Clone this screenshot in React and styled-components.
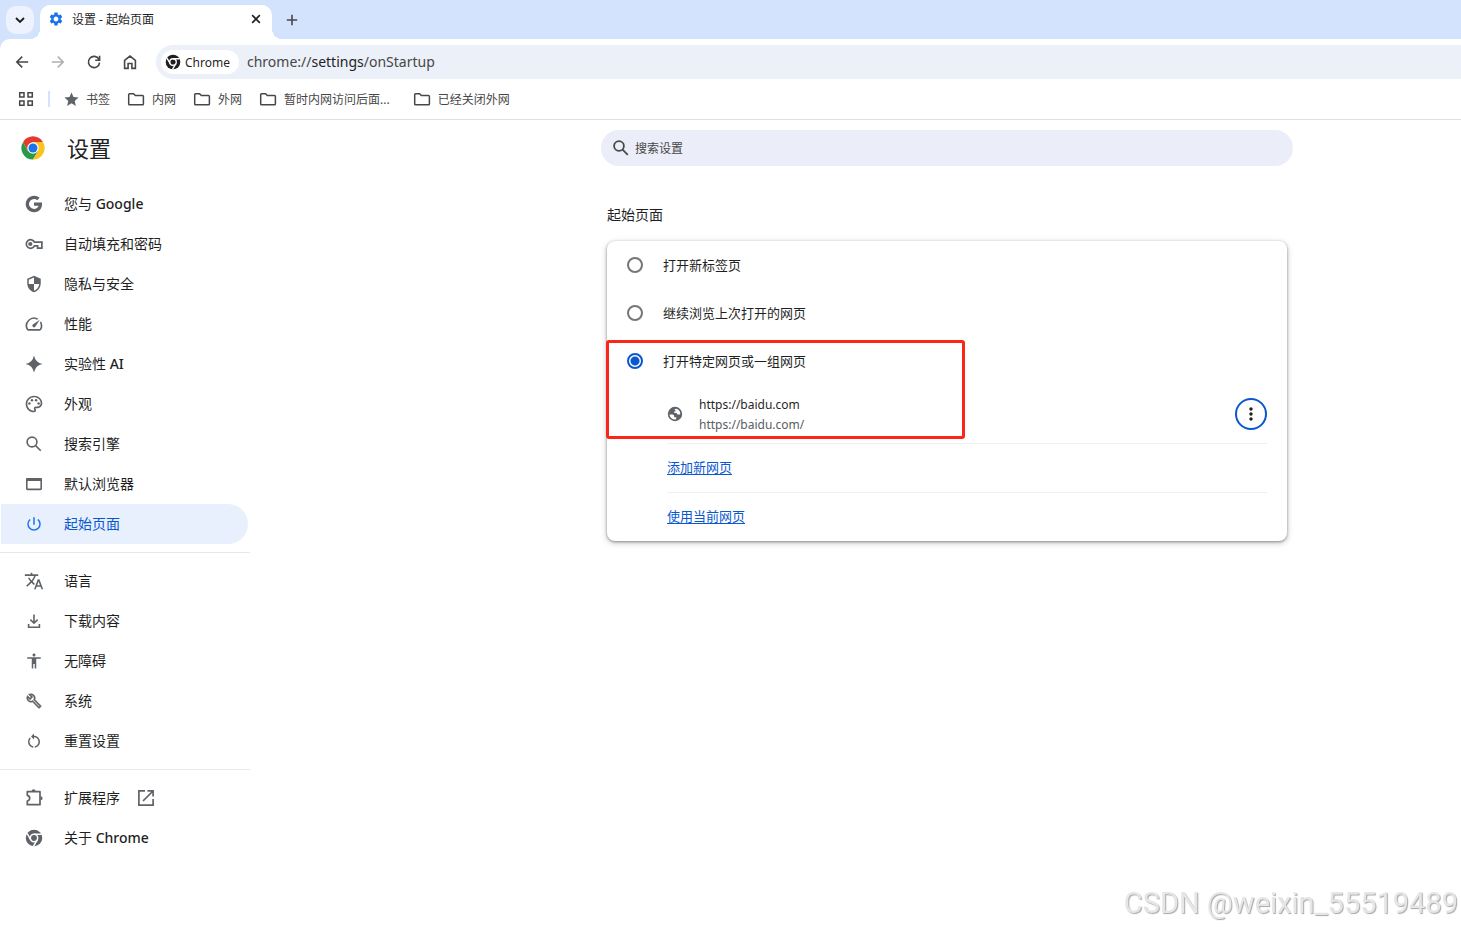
import React, { useState } from "react";
import styled, { createGlobalStyle } from "styled-components";
import {
  MdSettings, MdOutlineSpeed, MdOutlinePalette, MdPowerSettingsNew,
  MdTranslate, MdAccessibility, MdRestartAlt,
  MdMoreVert, MdStar, MdSecurity,
} from "react-icons/md";

const GlobalStyle = createGlobalStyle`
  * { box-sizing: border-box; }
  body {
    margin: 0;
    background: #fff;
    color: #202124;
    font-family: "Noto Sans", "Noto Sans CJK SC", sans-serif;
    font-size: 13px;
  }
  button, input { font: inherit; color: inherit; }
  svg { display: block; flex: none; }
`;

/* ---------- icons ---------- */

const Line = ({ size = 20, width = 2, children }) => (
  <svg width={size} height={size} viewBox="0 0 20 20" fill="none" stroke="currentColor" strokeWidth={width} aria-hidden="true">
    {children}
  </svg>
);

const ChevronIcon = () => <Line size={16}><path d="M5 7.5l5 5 5-5" strokeWidth="2.4" /></Line>;
const CloseIcon = () => <Line size={16}><path d="M5.2 5.2l9.6 9.6M14.8 5.2l-9.6 9.6" /></Line>;
const PlusIcon = () => <Line size={16}><path d="M10 3.5v13M3.5 10h13" /></Line>;
const BackIcon = () => <Line width={1.6}><path d="M16.2 10H5M10.2 4.6L4.8 10l5.4 5.4" /></Line>;
const ForwardIcon = () => <Line width={1.6}><path d="M3.8 10H15M9.8 4.6l5.4 5.4-5.4 5.4" /></Line>;
const ReloadIcon = () => <Line width={1.6}><path d="M14.9 7.2A5.6 5.6 0 1 0 15.6 10.6M15.6 3.8v4.4h-4.4" /></Line>;
const HomeIcon = () => <Line width={1.6}><path d="M4.6 8.3L10 4.1l5.4 4.2v8.1h-3.5v-4.900H8.100v4.900H4.600z" /></Line>;
const GridIcon = () => (
  <Line width={1.5}>
    <path d="M3.700 3.700h4.300v4.300H3.700zM12 3.700h4.300v4.300H12zM3.700 12h4.300v4.300H3.700zM12 12h4.300v4.300H12z" />
  </Line>
);
const FolderIcon = () => (
  <Line width={1.5}>
    <path d="M2.7 15V5.6q0-.9.9-.9h4l1.7 1.8h7.2q.9 0 .9.9V15q0 .8-.9.8H3.6q-.9 0-.9-.8z" />
  </Line>
);
const SearchIcon = ({ width = 1.6 }) => (
  <Line width={width}><circle cx="8" cy="8" r="4.9" /><path d="M11.6 11.6l5.2 5.2" /></Line>
);
const GoogleIcon = () => (
  <svg width="20" height="20" viewBox="0 0 24 24" fill="currentColor" aria-hidden="true">
    <path d="M12 10.200v3.900H17.500c-.7 2.300-2.600 3.900-5.500 3.900a6 6 0 1 1 3.900-10.600l2.900-2.800A10 10 0 1 0 12 22c8.400 0 10.300-7.800 9.500-11.800z" />
  </svg>
);
const KeyIcon = () => (
  <Line width={1.7}>
    <path d="M10.500 8.200A4.300 4.300 0 1 0 10.500 11.800H13.600V14.200H17.900V8.200z" />
    <circle cx="6.300" cy="10" r="2.100" fill="currentColor" stroke="none" />
  </Line>
);
const SparkIcon = () => (
  <svg width="20" height="20" viewBox="0 0 20 20" fill="currentColor" aria-hidden="true">
    <path d="M10 1.500Q11.400 8.600 18.500 10Q11.400 11.400 10 18.500Q8.600 11.400 1.500 10Q8.600 8.600 10 1.500z" />
  </svg>
);
const WindowIcon = () => (
  <Line width={1.6}>
    <rect x="2.800" y="4.800" width="14.400" height="10.600" rx=".6" />
    <path d="M2.500 5.500h15" strokeWidth="3" />
  </Line>
);
const DownloadIcon = () => (
  <Line width={1.6}>
    <path d="M10 3.500v8.500M6.400 8.600L10 12.200l3.600-3.600M4.600 13v3.200h10.800V13" />
  </Line>
);
const WrenchIcon = () => (
  <svg width="16" height="16" viewBox="0 0 24 24" fill="currentColor" stroke="currentColor" strokeWidth=".6" aria-hidden="true">
    <path d="M22.61 18.99l-9.08-9.08c.93-2.34.45-5.1-1.44-7C9.79.61 6.21.4 3.66 2.26L7.5 6.11 6.08 7.52 2.25 3.69C.39 6.23.6 9.82 2.9 12.11c1.86 1.86 4.57 2.35 6.89 1.48l9.11 9.11c.39.39 1.02.39 1.41 0l2.3-2.3c.4-.38.4-1.01 0-1.41zm-3 1.6l-9.46-9.46c-.61.45-1.29.72-2 .82-1.36.2-2.79-.21-3.83-1.25C3.37 9.76 2.93 8.5 3 7.26l3.09 3.09 4.24-4.24-3.09-3.09c1.24-.07 2.49.37 3.44 1.31 1.08 1.08 1.49 2.57 1.24 3.96-.12.71-.42 1.37-.88 1.96l9.45 9.45-.88.89z" />
  </svg>
);
const PuzzleIcon = () => (
  <Line width={1.7}>
    <path d="M3.300 3.700H16V16.700H3.300V13Q5.700 12.300 5.700 10.200Q5.700 8.100 3.300 7.400z" strokeLinejoin="round" />
    <path d="M7.600 3.200a2 2 0 0 1 4 0zM16.600 8.200a2 2 0 0 1 0 4z" fill="currentColor" stroke="none" />
  </Line>
);
const OpenIcon = () => (
  <Line width={1.7}>
    <path d="M9 2.900H2.900V17.100H17.100V11M11.500 2.900H17.100V8.500M17 3L7 13" />
  </Line>
);
const GlobeIcon = () => (
  <svg width="16" height="16" viewBox="0 0 16 16" aria-hidden="true">
    <circle cx="8" cy="8" r="7.200" fill="#5f6368" />
    <path d="M2.400 8.500H5.400Q7.200 8.700 7.200 10.300V11.200H9.200V13.300A5.600 5.600 0 0 1 2.400 8.500z" fill="#fff" />
    <path d="M7.400 3.700Q8.400 2.500 10.200 3A5.500 5.500 0 0 1 13.300 8Q13 8.600 12.300 8.400H10.800Q9.800 8.200 9.700 7H7.300V5.600H8.400Q9 5 8.400 4.600z" fill="#fff" />
  </svg>
);
const ChromeMono = ({ size = 18 }) => (
  <svg width={size} height={size} viewBox="0 0 24 24" aria-hidden="true">
    <circle cx="12" cy="12" r="11" fill="currentColor" />
    <circle cx="12" cy="12" r="4.9" fill="none" stroke="#fff" strokeWidth="2" />
    <path d="M12 7.100H22M7.760 14.450L2.760 5.790M16.240 14.450L11.240 23.110" stroke="#fff" strokeWidth="2" />
  </svg>
);
const ChromeLogo = () => (
  <svg width="24" height="24" viewBox="0 0 48 48" aria-hidden="true">
    <path d="M24 12H43.800A23 23 0 0 0 4.200 12L13.600 30z" fill="#e33b2e" />
    <path d="M13.600 30L4.200 12A23 23 0 0 0 24 47L34.400 30z" fill="#2a9a48" />
    <path d="M34.400 30L24 47A23 23 0 0 0 43.800 12H24z" fill="#fcc31e" />
    <circle cx="24" cy="24" r="11.5" fill="#fff" />
    <circle cx="24" cy="24" r="9" fill="#1a73e8" />
  </svg>
);

/* ---------- browser frame ---------- */

const Label = styled.span`
  padding-bottom: 2px;
`;
const TabStrip = styled.div`
  display: flex;
  align-items: flex-end;
  height: 39px;
  padding-left: 6px;
  background: #d3e3fd;
`;
const PlainButton = styled.button`
  display: grid;
  place-items: center;
  padding: 0;
  border: 0;
  background: none;
  color: ${(p) => p.$color || "#474747"};
  width: ${(p) => p.$size || 28}px;
  height: ${(p) => p.$size || 28}px;
`;
const TabSearch = styled(PlainButton)`
  align-self: center;
  margin-right: 6px;
  border-radius: 10px;
  background: #ecf3fe;
  color: #1f1f1f;
`;
const Tab = styled.div`
  position: relative;
  display: flex;
  align-items: center;
  gap: 8px;
  width: 232px;
  height: 34px;
  padding: 0 8px 6px;
  border-radius: 10px 10px 0 0;
  background: #fff;
  color: #1f1f1f;
  font-size: 12px;
  &::before, &::after {
    content: "";
    position: absolute;
    bottom: 0;
    width: 10px;
    height: 10px;
  }
  &::before { right: 100%; background: radial-gradient(circle at 0 0, transparent 10px, #fff 10px); }
  &::after { left: 100%; background: radial-gradient(circle at 100% 0, transparent 10px, #fff 10px); }
  & > span { flex: 1; }
`;
const NewTab = styled(PlainButton)`
  align-self: center;
  margin-left: 6px;
`;
const ToolbarWrap = styled.div`background: #d3e3fd;`;
const Toolbar = styled.div`
  display: flex;
  align-items: center;
  gap: 8px;
  height: 46px;
  padding-left: 8px;
  border-radius: 10px 0 0 0;
  background: #fff;
`;
const Omnibox = styled.div`
  display: flex;
  flex: 1;
  align-items: center;
  gap: 8px;
  height: 34px;
  margin-left: 4px;
  padding-left: 5px;
  border-radius: 17px 0 0 17px;
  background: #ecf0f9;
  color: #474747;
  font-size: 14px;
  b { color: #1f1f1f; font-weight: 400; }
`;
const SiteChip = styled(PlainButton)`
  display: flex;
  align-items: center;
  gap: 4px;
  width: auto;
  height: 24px;
  padding: 0 9px 0 4px;
  border-radius: 12px;
  background: #fff;
  color: #1f1f1f;
  font-size: 12px;
`;
const Bookmarks = styled.nav`
  display: flex;
  align-items: center;
  height: 35px;
  padding: 0 16px 6px;
  border-bottom: 1px solid #e0e0e0;
  color: #474747;
  font-size: 12px;
`;
const Divider = styled.span`
  width: 2px;
  height: 16px;
  margin: 0 13px 0 12px;
  background: #d3e3fd;
`;
const Bookmark = styled.a`
  display: flex;
  align-items: center;
  gap: 6px;
  margin-right: ${(p) => (p.$long ? 22 : 16)}px;
  color: inherit;
  text-decoration: none;
  white-space: nowrap;
`;

/* ---------- settings ---------- */

const Page = styled.div`
  display: grid;
  grid-template-columns: 433px minmax(0, 1fr);
`;
const Side = styled.aside`width: 250px;`;
const Brand = styled.header`
  display: flex;
  align-items: center;
  gap: 22px;
  height: 56px;
  padding-left: 21px;
  margin-bottom: 8px;
  h1 { margin: 0; padding-bottom: 2px; font-size: 22px; font-weight: 400; }
`;
const MenuItem = styled.a`
  display: flex;
  align-items: center;
  gap: 16px;
  height: 40px;
  margin: 0 2px 0 1px;
  padding-left: 23px;
  border-radius: 0 20px 20px 0;
  background: ${(p) => (p.$active ? "#e8f0fe" : "none")};
  color: ${(p) => (p.$active ? "#0b57d0" : "#1f1f1f")};
  font-size: 14px;
  text-decoration: none;
  ${Label} { padding-left: 4px; }
  b { font-weight: 500; }
`;
const IconSlot = styled.span`
  display: grid;
  place-items: center;
  width: 20px;
  height: 20px;
  color: ${(p) => (p.$active ? "#1a73e8" : "#5f6368")};
`;
const Rule = styled.hr`
  margin: 8px 0;
  border: 0;
  border-top: 1px solid #e8e8e8;
`;
const Main = styled.main`
  padding: 10px 12px 0;
`;
const SearchBox = styled.label`
  display: flex;
  align-items: center;
  gap: 4px;
  max-width: 692px;
  height: 36px;
  margin: 0 auto;
  padding: 0 10px;
  border-radius: 18px;
  background: #ebeef8;
  color: #474747;
  font-size: 12px;
  input {
    flex: 1;
    padding: 0;
    border: 0;
    outline: 0;
    background: none;
  }
  input::placeholder { color: #474747; opacity: 1; }
`;
const Section = styled.section`
  max-width: 680px;
  margin: 38px auto 0;
  h2 { margin: 0 0 15px; font-size: 14px; line-height: 22px; font-weight: 400; color: #1f1f1f; }
`;
const Card = styled.div`
  position: relative;
  padding: 0 20px;
  border-radius: 8px;
  background: #fff;
  box-shadow: 0 1px 3px rgba(0, 0, 0, 0.4), 0 2px 6px 1px rgba(0, 0, 0, 0.14);
`;
const RadioRow = styled.label`
  display: flex;
  align-items: center;
  gap: 20px;
  height: 48px;
  color: #1f1f1f;
  input {
    appearance: none;
    width: 16px;
    height: 16px;
    margin: 0;
    border: 2px solid #747775;
    border-radius: 50%;
  }
  input:checked {
    border-color: #0b57d0;
    background: radial-gradient(circle, #0b57d0 4px, transparent 5px);
  }
`;
const SubList = styled.div`padding-left: 40px;`;
const SubRow = styled.div`
  display: flex;
  align-items: center;
  gap: 16px;
  height: ${(p) => p.$height || 49}px;
  border-bottom: ${(p) => (p.$last ? "0" : "1px solid #efefef")};
  a { padding-bottom: 3px; color: #0b57d0; text-underline-offset: 2px; }
`;
const UrlText = styled.div`
  flex: 1;
  padding-top: 2px;
  font-size: 12px;
  line-height: 20px;
  color: #1f1f1f;
  small { display: block; font-size: 12px; color: #5a5d60; }
`;
const MoreButton = styled(PlainButton)`
  border: 2px solid #0b57d0;
  border-radius: 50%;
  color: #1f1f1f;
`;
const Highlight = styled.div`
  position: absolute;
  top: 99px;
  left: -1px;
  width: 359px;
  height: 99px;
  border: 3px solid #fb2519;
  border-radius: 3px;
  pointer-events: none;
`;
const Watermark = styled.div`
  position: fixed;
  right: 3px;
  bottom: 10px;
  color: #e6e6e6;
  font: 29px/32px Roboto, sans-serif;
  text-shadow: 1px 1px 1px #a8a8a8;
`;

const groups = [
  [
    { icon: <GoogleIcon />, label: "您与 ", latin: "Google" },
    { icon: <KeyIcon />, label: "自动填充和密码" },
    { icon: <MdSecurity size={18} />, label: "隐私与安全" },
    { icon: <MdOutlineSpeed size={20} />, label: "性能" },
    { icon: <SparkIcon />, label: "实验性 ", latin: "AI" },
    { icon: <MdOutlinePalette size={20} />, label: "外观" },
    { icon: <SearchIcon />, label: "搜索引擎" },
    { icon: <WindowIcon />, label: "默认浏览器" },
    { icon: <MdPowerSettingsNew size={18} />, label: "起始页面", active: true },
  ],
  [
    { icon: <MdTranslate size={20} />, label: "语言" },
    { icon: <DownloadIcon />, label: "下载内容" },
    { icon: <MdAccessibility size={18} />, label: "无障碍" },
    { icon: <WrenchIcon />, label: "系统" },
    { icon: <MdRestartAlt size={18} />, label: "重置设置" },
  ],
  [
    { icon: <PuzzleIcon />, label: "扩展程序", external: true },
    { icon: <ChromeMono />, label: "关于 ", latin: "Chrome" },
  ],
];

const startupOptions = ["打开新标签页", "继续浏览上次打开的网页", "打开特定网页或一组网页"];

export default function App() {
  const [choice, setChoice] = useState(2);
  return (
    <>
      <GlobalStyle />
      <TabStrip>
        <TabSearch aria-label="搜索标签页"><ChevronIcon /></TabSearch>
        <Tab>
          <MdSettings size={16} color="#1a73e8" />
          <span>设置 - 起始页面</span>
          <PlainButton $size={16} $color="#1f1f1f" aria-label="关闭"><CloseIcon /></PlainButton>
        </Tab>
        <NewTab aria-label="新标签页"><PlusIcon /></NewTab>
      </TabStrip>
      <ToolbarWrap>
        <Toolbar>
          <PlainButton aria-label="后退"><BackIcon /></PlainButton>
          <PlainButton $color="#b0b0b0" aria-label="前进"><ForwardIcon /></PlainButton>
          <PlainButton aria-label="重新加载"><ReloadIcon /></PlainButton>
          <PlainButton aria-label="主页"><HomeIcon /></PlainButton>
          <Omnibox>
            <SiteChip><ChromeMono size={16} />Chrome</SiteChip>
            <Label>chrome://<b>settings</b>/onStartup</Label>
          </Omnibox>
        </Toolbar>
      </ToolbarWrap>
      <Bookmarks>
        <PlainButton $size={20} aria-label="应用"><GridIcon /></PlainButton>
        <Divider />
        <Bookmark href="#"><MdStar size={17} color="#5f6368" />书签</Bookmark>
        <Bookmark href="#"><FolderIcon />内网</Bookmark>
        <Bookmark href="#"><FolderIcon />外网</Bookmark>
        <Bookmark href="#" $long><FolderIcon />暂时内网访问后面...</Bookmark>
        <Bookmark href="#"><FolderIcon />已经关闭外网</Bookmark>
      </Bookmarks>
      <Page>
        <Side>
          <Brand><ChromeLogo /><h1>设置</h1></Brand>
          <nav>
            {groups.map((items, i) => (
              <React.Fragment key={i}>
                {i > 0 && <Rule />}
                {items.map((item) => (
                  <MenuItem key={item.label} href="#" $active={item.active}>
                    <IconSlot $active={item.active}>{item.icon}</IconSlot>
                    <Label>{item.label}{item.latin && <b>{item.latin}</b>}</Label>
                    {item.external && <IconSlot><OpenIcon /></IconSlot>}
                  </MenuItem>
                ))}
              </React.Fragment>
            ))}
          </nav>
        </Side>
        <Main>
          <SearchBox>
            <SearchIcon width={1.8} />
            <input type="search" placeholder="搜索设置" aria-label="搜索设置" />
          </SearchBox>
          <Section>
            <h2>起始页面</h2>
            <Card>
              {startupOptions.map((text, i) => (
                <RadioRow key={text}>
                  <input type="radio" name="startup" checked={choice === i} onChange={() => setChoice(i)} />
                  <Label>{text}</Label>
                </RadioRow>
              ))}
              <SubList>
                <SubRow $height={59}>
                  <GlobeIcon />
                  <UrlText>https://baidu.com<small>https://baidu.com/</small></UrlText>
                  <MoreButton $size={32} aria-label="更多操作"><MdMoreVert size={20} /></MoreButton>
                </SubRow>
                <SubRow><a href="#">添加新网页</a></SubRow>
                <SubRow $last $height={48}><a href="#">使用当前网页</a></SubRow>
              </SubList>
              <Highlight />
            </Card>
          </Section>
        </Main>
      </Page>
      <Watermark>CSDN @weixin_55519489</Watermark>
    </>
  );
}
